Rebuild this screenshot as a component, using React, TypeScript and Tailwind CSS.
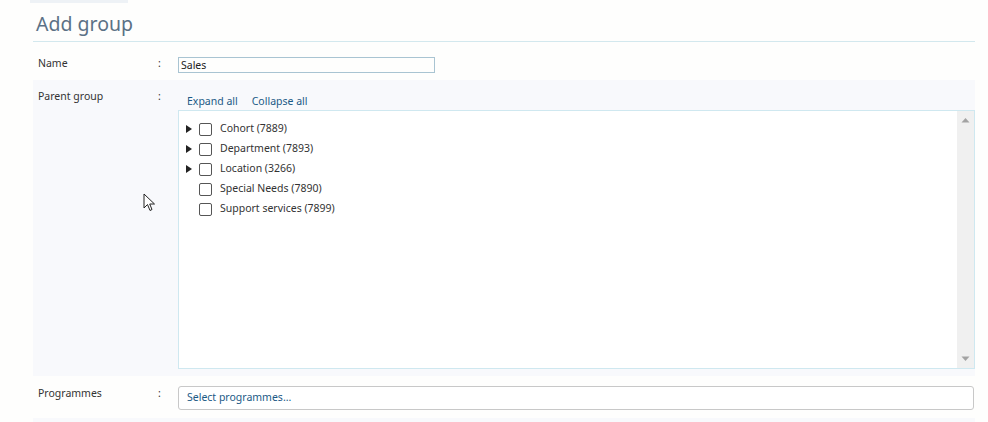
import { useState } from "react";

type Node = { id: string; label: string; hasChildren: boolean };

const GROUPS: Node[] = [
  { id: "cohort", label: "Cohort (7889)", hasChildren: true },
  { id: "dept", label: "Department (7893)", hasChildren: true },
  { id: "loc", label: "Location (3266)", hasChildren: true },
  { id: "sen", label: "Special Needs (7890)", hasChildren: false },
  { id: "support", label: "Support services (7899)", hasChildren: false },
];

function Label({ text }: { text: string }) {
  return (
    <div className="flex w-[145px] shrink-0 pl-[5px]">
      <span className="w-[120px]">{text}</span>
      <span>:</span>
    </div>
  );
}

export default function App() {
  const [name, setName] = useState("Sales");
  const [checked, setChecked] = useState<Record<string, boolean>>({});

  return (
    <div className="relative h-[422px] w-[988px] overflow-hidden bg-[#fefefd] font-['Noto_Sans',sans-serif] text-[10.5px] text-[#333]">
      <div className="absolute left-[30px] top-0 h-[3px] w-[98px] bg-[#eef2f6]" />
      <div className="ml-[33px] w-[942px]">
        <h1 className="border-b border-[#d3e8ee] pb-[3px] pl-[3px] pt-[9px] text-[19.5px] leading-[29px] text-[#5b7186]">
          Add group
        </h1>

        {/* Name */}
        <div className="flex h-[38px] items-start pt-[14px]">
          <Label text="Name" />
          <input
            value={name}
            onChange={(e) => setName(e.target.value)}
            className="mt-[1px] h-[16px] w-[257px] border border-[#a9c4d2] px-[2px] text-[10.5px] leading-[14px] text-[#222] outline-none"
          />
        </div>

        {/* Parent group */}
        <div className="flex h-[296px] bg-[#f8f9fc] pt-[9px]">
          <Label text="Parent group" />
          <div className="flex-1">
            <div className="flex gap-[14px] pl-[9px] pt-[4px] leading-[16px] text-[#1b5a86]">
              <span>Expand all</span>
              <span>Collapse all</span>
            </div>
            <div className="mt-[1px] flex h-[259px] border border-[#cfe8f0] bg-white">
              <ul className="flex-1 pl-[3px] pt-[8px]">
                {GROUPS.map((g) => (
                  <li key={g.id} className="flex h-[20px] items-center">
                    <span className="flex w-[14px] justify-center">
                      {g.hasChildren && (
                        <svg width="6" height="8" viewBox="0 0 6 8">
                          <path d="M0 0 L6 4 L0 8 Z" fill="#222" />
                        </svg>
                      )}
                    </span>
                    <button
                      type="button"
                      onClick={() => setChecked((c) => ({ ...c, [g.id]: !c[g.id] }))}
                      className="ml-[3px] flex size-[13px] items-center justify-center rounded-[2px] border border-[#555] bg-white"
                    >
                      {checked[g.id] && <span className="size-[7px] bg-[#333]" />}
                    </button>
                    <span className="ml-[8px] text-[#333]">{g.label}</span>
                  </li>
                ))}
              </ul>
              <div className="flex w-[17px] flex-col justify-between bg-[#f0f0f0] py-[6px]">
                <svg width="17" height="6" viewBox="0 0 17 6">
                  <path d="M4.5 5.5 L8.5 1 L12.5 5.5 Z" fill="#a3a3a3" />
                </svg>
                <svg width="17" height="6" viewBox="0 0 17 6">
                  <path d="M4.5 0.5 L8.5 5 L12.5 0.5 Z" fill="#a3a3a3" />
                </svg>
              </div>
            </div>
          </div>
        </div>

        {/* Programmes */}
        <div className="flex h-[42px] items-start pt-[10px]">
          <Label text="Programmes" />
          <div className="mr-[1px] flex h-[24px] flex-1 items-center rounded-[3px] border border-[#c8c8c8] bg-white pl-[8px] text-[#1b5a86]">
            Select programmes...
          </div>
        </div>
        <div className="h-[6px] bg-[#f8f9fc]" />
      </div>

      {/* mouse cursor */}
      <svg className="absolute left-[143px] top-[193px]" width="13" height="20" viewBox="0 0 13 20">
        <path d="M1 1 L1 15 L4.5 11.5 L7 17.5 L9 16.5 L6.7 11 L11.5 11 Z" fill="#fff" stroke="#222" strokeWidth="1" />
      </svg>
    </div>
  );
}
